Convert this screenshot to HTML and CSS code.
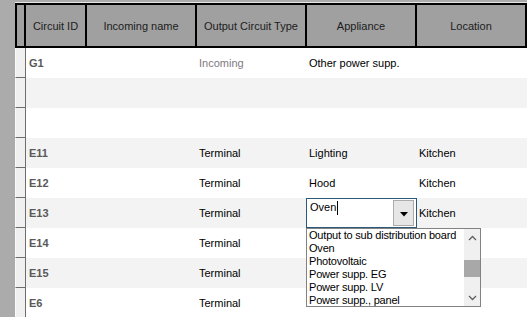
FILE: index.html
```html
<!DOCTYPE html>
<html lang="en">
<head>
    <meta charset="UTF-8">
    <title>Circuits</title>
    <link rel="stylesheet" href="styles.css">
</head>
<body>
    <div class="grid">
        <div class="row head">
            <div class="hcell corner"></div>
            <div class="hcell">Circuit ID</div>
            <div class="hcell">Incoming name</div>
            <div class="hcell">Output Circuit Type</div>
            <div class="hcell">Appliance</div>
            <div class="hcell">Location</div>
        </div>

        <div class="row">
            <div class="rh"></div>
            <div class="cell id">G1</div>
            <div class="cell"></div>
            <div class="cell muted">Incoming</div>
            <div class="cell">Other power supp.</div>
            <div class="cell"></div>
        </div>
        <div class="row alt">
            <div class="rh"></div>
            <div class="cell id"></div>
            <div class="cell"></div>
            <div class="cell"></div>
            <div class="cell"></div>
            <div class="cell"></div>
        </div>
        <div class="row">
            <div class="rh"></div>
            <div class="cell id"></div>
            <div class="cell"></div>
            <div class="cell"></div>
            <div class="cell"></div>
            <div class="cell"></div>
        </div>
        <div class="row alt">
            <div class="rh"></div>
            <div class="cell id">E11</div>
            <div class="cell"></div>
            <div class="cell">Terminal</div>
            <div class="cell">Lighting</div>
            <div class="cell">Kitchen</div>
        </div>
        <div class="row">
            <div class="rh"></div>
            <div class="cell id">E12</div>
            <div class="cell"></div>
            <div class="cell">Terminal</div>
            <div class="cell">Hood</div>
            <div class="cell">Kitchen</div>
        </div>
        <div class="row alt">
            <div class="rh"></div>
            <div class="cell id">E13</div>
            <div class="cell"></div>
            <div class="cell">Terminal</div>
            <div class="cell editing">
                <!-- combo editor open on this cell -->
                <div class="combo">
                    <span class="combo-text">Oven</span><span class="caret"></span>
                    <div class="combo-btn">
                        <svg width="8" height="5" viewBox="0 0 8 5"><polygon points="0,0 8,0 4,4.5" fill="#000"/></svg>
                    </div>
                </div>
                <div class="droplist">
                    <ul class="items">
                        <li>Output to sub distribution board</li>
                        <li>Oven</li>
                        <li>Photovoltaic</li>
                        <li>Power supp. EG</li>
                        <li>Power supp. LV</li>
                        <li>Power supp., panel</li>
                    </ul>
                    <div class="vscroll">
                        <div class="sbtn">
                            <svg width="9" height="6" viewBox="0 0 9 6"><polyline points="1,5 4.5,1.5 8,5" fill="none" stroke="#606060" stroke-width="1.3"/></svg>
                        </div>
                        <div class="track"><div class="thumb"></div></div>
                        <div class="sbtn">
                            <svg width="9" height="6" viewBox="0 0 9 6"><polyline points="1,1 4.5,4.5 8,1" fill="none" stroke="#606060" stroke-width="1.3"/></svg>
                        </div>
                    </div>
                </div>
            </div>
            <div class="cell">Kitchen</div>
        </div>
        <div class="row">
            <div class="rh"></div>
            <div class="cell id">E14</div>
            <div class="cell"></div>
            <div class="cell">Terminal</div>
            <div class="cell"></div>
            <div class="cell"></div>
        </div>
        <div class="row alt">
            <div class="rh"></div>
            <div class="cell id">E15</div>
            <div class="cell"></div>
            <div class="cell">Terminal</div>
            <div class="cell"></div>
            <div class="cell"></div>
        </div>
        <div class="row">
            <div class="rh"></div>
            <div class="cell id">E6</div>
            <div class="cell"></div>
            <div class="cell">Terminal</div>
            <div class="cell"></div>
            <div class="cell"></div>
        </div>
    </div>
</body>
</html>
```

FILE: styles.css
```css
:root {
    --frame: #ababab;
    --header-bg: #a0a0a0;
    --row-alt: #f3f3f3;
    --rowhead-bg: #f0f0f0;
    --rowhead-line: #6e6e6e;
    --id-color: #595959;
}

html, body {
    margin: 0;
    height: 100%;
    overflow: hidden;
}

body {
    background-color: var(--frame);
    padding: 2px 0 0 15px;
    box-sizing: border-box;
    font-family: "Liberation Sans", Arial, sans-serif;
    font-size: 11px;
    color: #111;
}

.grid {
    border-top: 1px solid #e6e6e6;
    background-color: #fff;
    height: 100%;
}

.row {
    display: grid;
    grid-template-columns: 11px 61px 110px 110px 110px 110px;
    height: 30px;
    background-color: #fff;
}

.row.alt .cell {
    background-color: var(--row-alt);
}

/* --- header --- */

.row.head {
    height: 45px;
    background-color: var(--header-bg);
}

.hcell {
    box-sizing: border-box;
    border-top: 2px solid #000;
    border-bottom: 2px solid #000;
    border-right: 2px solid #000;
    display: flex;
    align-items: center;
    justify-content: center;
    color: #1c1c1c;
    white-space: nowrap;
}

.hcell.corner {
    border-left: 2px solid #000;
}

/* --- body cells --- */

.rh {
    box-sizing: border-box;
    background-color: var(--rowhead-bg);
    border-left: 1px solid #fafafa;
    border-right: 1px solid var(--rowhead-line);
    border-bottom: 1px solid var(--rowhead-line);
}

.cell {
    display: flex;
    align-items: center;
    padding-left: 2px;
    white-space: nowrap;
    color: #000;
}

.cell.id {
    padding-left: 3px;
    font-weight: bold;
    color: var(--id-color);
}

.cell.muted {
    color: #7e7a80;
}

/* --- combo editor --- */

.cell.editing {
    position: relative;
}

.combo {
    position: absolute;
    left: -1px;
    top: 0;
    width: 111px;
    height: 30px;
    box-sizing: border-box;
    border: 1px solid #2a5a78;
    background-color: #fff;
    padding: 2px 0 0 3px;
    display: flex;
    align-items: flex-start;
    z-index: 2;
}

.combo-text {
    line-height: 13px;
}

.caret {
    display: inline-block;
    width: 1px;
    height: 14px;
    margin-left: 1px;
    background-color: #000;
}

.combo-btn {
    position: absolute;
    top: 1px;
    right: 2px;
    width: 21px;
    height: 26px;
    box-sizing: border-box;
    border: 1px solid #acacac;
    background-color: #e6e6e6;
    display: flex;
    align-items: center;
    justify-content: center;
    padding-top: 3px;
}

.droplist {
    position: absolute;
    left: -1px;
    top: 30px;
    width: 175px;
    height: 79px;
    box-sizing: border-box;
    border: 1px solid #828282;
    background-color: #fff;
    display: flex;
    z-index: 3;
}

.items {
    list-style: none;
    margin: 0;
    padding: 0 0 0 2px;
    flex: 1;
    overflow: hidden;
    letter-spacing: -0.2px;
}

.items li {
    line-height: 13px;
    height: 13px;
    color: #000;
    white-space: nowrap;
}

.vscroll {
    width: 16px;
    background-color: #f0f0f0;
    display: flex;
    flex-direction: column;
}

.sbtn {
    height: 17px;
    display: flex;
    align-items: center;
    justify-content: center;
}

.track {
    flex: 1;
    padding-top: 14px;
}

.thumb {
    height: 17px;
    background-color: #a8a8a8;
}
```
